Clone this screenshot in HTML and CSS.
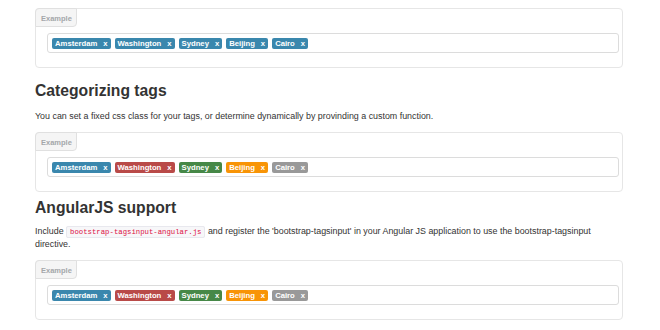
FILE: index.html
```html
<!DOCTYPE html>
<html lang="en">
<head>
  <meta charset="utf-8" />
  <title>bootstrap-tagsinput</title>
  <link rel="stylesheet" href="styles.css">
</head>

<body>
  <div class="page">
    <div class="example example-first">
      <div class="example-label">Example</div>
      <div class="tags-input">
        <span class="tag info">Amsterdam<span class="remove">x</span></span>
        <span class="tag info">Washington<span class="remove">x</span></span>
        <span class="tag info">Sydney<span class="remove">x</span></span>
        <span class="tag info">Beijing<span class="remove">x</span></span>
        <span class="tag info">Cairo<span class="remove">x</span></span>
      </div>
    </div>

    <h2 class="heading-first">Categorizing tags</h2>
    <p class="lead-first">You can set a fixed css class for your tags, or determine dynamically by provinding a custom function.</p>

    <div class="example">
      <div class="example-label">Example</div>
      <div class="tags-input">
        <span class="tag info">Amsterdam<span class="remove">x</span></span>
        <span class="tag important">Washington<span class="remove">x</span></span>
        <span class="tag success">Sydney<span class="remove">x</span></span>
        <span class="tag warning">Beijing<span class="remove">x</span></span>
        <span class="tag default">Cairo<span class="remove">x</span></span>
      </div>
    </div>

    <h2 class="heading-second">AngularJS support</h2>
    <p class="lead-second">Include <code>bootstrap-tagsinput-angular.js</code> and register the 'bootstrap-tagsinput' in your Angular JS application to use the bootstrap-tagsinput directive.</p>

    <div class="example">
      <div class="example-label">Example</div>
      <div class="tags-input">
        <span class="tag info">Amsterdam<span class="remove">x</span></span>
        <span class="tag important">Washington<span class="remove">x</span></span>
        <span class="tag success">Sydney<span class="remove">x</span></span>
        <span class="tag warning">Beijing<span class="remove">x</span></span>
        <span class="tag default">Cairo<span class="remove">x</span></span>
      </div>
    </div>
  </div>
</body>
</html>
```

FILE: styles.css
```css
html, body {
  margin: 0;
  padding: 0;
  background: #fff;
  color: #333;
  font-family: "Liberation Sans", Arial, sans-serif;
}

.page {
  width: 588px;
  padding: 8px 0 0 35px;
}

/* Example boxes */
.example {
  border: 1px solid #e6e6e6;
  border-radius: 4px;
  padding: 0 3px 14px 0;
  height: 60px;
  box-sizing: border-box;
}

.example-label {
  display: inline-block;
  margin: -1px 0 0 -1px;
  padding: 5px 4px 5px 5px;
  height: 19px;
  box-sizing: border-box;
  font-size: 7.5px;
  line-height: 9px;
  font-weight: bold;
  color: #a4a7aa;
  background: #f5f5f5;
  border: 1px solid #e0e0e0;
  border-radius: 4px 0 4px 0;
  vertical-align: top;
}

.tags-input {
  display: flex;
  align-items: center;
  gap: 4px;
  margin: 6px 0 0 11px;
  height: 20px;
  padding: 0 4px;
  box-sizing: border-box;
  border: 1px solid #dcdcdc;
  border-radius: 3px;
}

.tag {
  display: inline-block;
  height: 11px;
  padding: 0 3px;
  font-size: 7.7px;
  line-height: 11px;
  font-weight: bold;
  color: #fff;
  border-radius: 2px;
}

.tag .remove {
  margin-left: 6px;
}

.tag.info { background: #3a87ad; }
.tag.important { background: #b94a48; }
.tag.success { background: #468847; }
.tag.warning { background: #f89406; }
.tag.default { background: #999; }

/* Headings and text */
h2 {
  margin: 0;
  font-size: 15.7px;
  line-height: 20px;
  font-weight: bold;
  color: #333;
}

.heading-first { margin-top: 13px; }
.heading-second { margin-top: 6px; }

p {
  margin: 0;
  font-size: 8.9px;
  line-height: 13px;
}

.lead-first { margin: 9px 0 9px; }
.lead-second { margin: 7px 0 9px; }

code {
  font-family: "Liberation Mono", monospace;
  font-size: 7.3px;
  line-height: 9px;
  color: #dd1144;
  background: #f7f7f9;
  border: 1px solid #e8e8ee;
  border-radius: 2px;
  padding: 1px 3px;
}
```
